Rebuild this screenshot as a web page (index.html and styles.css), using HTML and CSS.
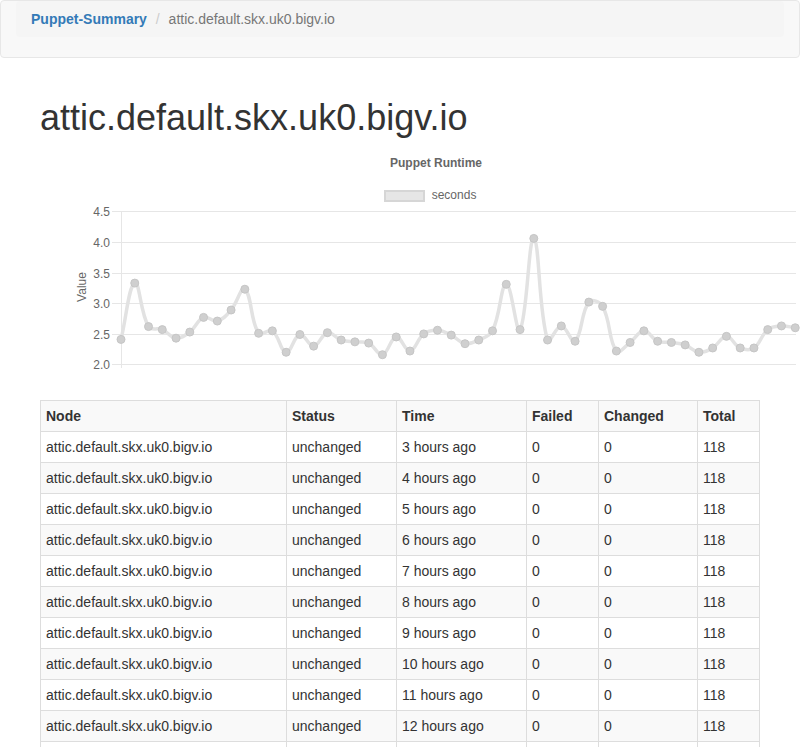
FILE: index.html
```html
<!DOCTYPE html>
<html lang="en">
<head>
<meta charset="utf-8">
<title>Puppet-Summary</title>
<link rel="stylesheet" href="styles.css">
</head>
<body>
<nav class="navbar">
  <div class="navbar-inner">
    <ol class="breadcrumb">
      <li><a href="#" class="brand">Puppet-Summary</a></li>
      <li class="active">attic.default.skx.uk0.bigv.io</li>
    </ol>
  </div>
</nav>
<div class="container">
  <h1 class="node-title">attic.default.skx.uk0.bigv.io</h1>
  <div class="chart-wrap">
    <svg class="chart" width="760" height="232" viewBox="0 0 760 232">
      <text class="chart-title" x="396" y="19.3" text-anchor="middle">Puppet Runtime</text>
      <rect class="legend-box" x="345" y="43" width="39" height="10"></rect>
      <text class="chart-label" x="391.7" y="50.5">seconds</text>
      <g class="grid">
        <line x1="72" y1="63.5" x2="756" y2="63.5"></line>
        <line x1="72" y1="94.5" x2="756" y2="94.5"></line>
        <line x1="72" y1="125.5" x2="756" y2="125.5"></line>
        <line x1="72" y1="155.5" x2="756" y2="155.5"></line>
        <line x1="72" y1="186.5" x2="756" y2="186.5"></line>
        <line x1="72" y1="216.5" x2="756" y2="216.5"></line>
        <line x1="81.5" y1="63" x2="81.5" y2="220"></line>
      </g>
      <g class="chart-label" text-anchor="end">
        <text x="70" y="68">4.5</text>
        <text x="70" y="99">4.0</text>
        <text x="70" y="130">3.5</text>
        <text x="70" y="160">3.0</text>
        <text x="70" y="191">2.5</text>
        <text x="70" y="221">2.0</text>
      </g>
      <text class="chart-label" x="0" y="0" text-anchor="middle" transform="translate(45.7 139) rotate(-90)">Value</text>
      <path id="series-line" class="series-line" d=""></path>
      <g id="series-points" class="series-points"></g>
    </svg>
  </div>
  <table class="reports">
    <colgroup>
      <col class="c-node">
      <col class="c-status">
      <col class="c-time">
      <col class="c-failed">
      <col class="c-changed">
      <col class="c-total">
    </colgroup>
    <tbody>
      <tr><th>Node</th><th>Status</th><th>Time</th><th>Failed</th><th>Changed</th><th>Total</th></tr>
      <tr><td>attic.default.skx.uk0.bigv.io</td><td>unchanged</td><td>3 hours ago</td><td>0</td><td>0</td><td>118</td></tr>
      <tr><td>attic.default.skx.uk0.bigv.io</td><td>unchanged</td><td>4 hours ago</td><td>0</td><td>0</td><td>118</td></tr>
      <tr><td>attic.default.skx.uk0.bigv.io</td><td>unchanged</td><td>5 hours ago</td><td>0</td><td>0</td><td>118</td></tr>
      <tr><td>attic.default.skx.uk0.bigv.io</td><td>unchanged</td><td>6 hours ago</td><td>0</td><td>0</td><td>118</td></tr>
      <tr><td>attic.default.skx.uk0.bigv.io</td><td>unchanged</td><td>7 hours ago</td><td>0</td><td>0</td><td>118</td></tr>
      <tr><td>attic.default.skx.uk0.bigv.io</td><td>unchanged</td><td>8 hours ago</td><td>0</td><td>0</td><td>118</td></tr>
      <tr><td>attic.default.skx.uk0.bigv.io</td><td>unchanged</td><td>9 hours ago</td><td>0</td><td>0</td><td>118</td></tr>
      <tr><td>attic.default.skx.uk0.bigv.io</td><td>unchanged</td><td>10 hours ago</td><td>0</td><td>0</td><td>118</td></tr>
      <tr><td>attic.default.skx.uk0.bigv.io</td><td>unchanged</td><td>11 hours ago</td><td>0</td><td>0</td><td>118</td></tr>
      <tr><td>attic.default.skx.uk0.bigv.io</td><td>unchanged</td><td>12 hours ago</td><td>0</td><td>0</td><td>118</td></tr>
      <tr><td>attic.default.skx.uk0.bigv.io</td><td>unchanged</td><td>13 hours ago</td><td>0</td><td>0</td><td>118</td></tr>
    </tbody>
  </table>
</div>
<script src="chart.js"></script>
</body>
</html>
```

FILE: styles.css
```css
html {
  overflow: hidden;
}

body {
  margin: 0;
  font-family: "Liberation Sans", Arial, Helvetica, sans-serif;
  font-size: 14px;
  line-height: 20px;
  color: #333;
  background: #fff;
}

.navbar {
  min-height: 50px;
  margin-bottom: 20px;
  background: #f8f8f8;
  border: 1px solid #e7e7e7;
  border-radius: 4px;
}

.navbar-inner {
  padding: 0 15px;
}

.breadcrumb {
  list-style: none;
  margin: 0 0 20px;
  padding: 8px 15px;
  background: #f5f5f5;
  border-radius: 4px;
}

.breadcrumb li {
  display: inline-block;
}

.breadcrumb li + li::before {
  content: "/\00a0";
  padding: 0 5px;
  color: #ccc;
}

.brand {
  color: #337ab7;
  font-weight: bold;
  text-decoration: none;
}

.active {
  color: #777;
}

.container {
  display: flow-root;
  box-sizing: border-box;
  width: 750px;
  margin: 0 auto;
  padding: 0 15px;
}

.node-title {
  margin: 20px 0 10px;
  font-size: 36px;
  font-weight: normal;
  line-height: 1.1;
  color: #333;
}

.chart-wrap {
  margin-bottom: 20px;
}

.chart {
  display: block;
  overflow: visible;
}

.chart-title {
  font-family: "Liberation Sans", Arial, sans-serif;
  font-size: 12px;
  font-weight: bold;
  fill: #666;
}

.chart-label {
  font-family: "Liberation Sans", Arial, sans-serif;
  font-size: 12px;
  fill: #666;
}

.legend-box {
  fill: #e6e6e6;
  stroke: #d6d6d6;
  stroke-width: 2;
}

.grid line {
  stroke: #e6e6e6;
  stroke-width: 1;
}

.series-line {
  fill: none;
  stroke: #e2e2e2;
  stroke-width: 3.5;
  stroke-linejoin: round;
}

.series-points circle {
  fill: #cfcfcf;
  stroke: #c6c6c6;
  stroke-width: 1;
}

.reports {
  width: 719px;
  table-layout: fixed;
  border-collapse: collapse;
  border: 1px solid #ddd;
  margin-bottom: 20px;
}

.reports th,
.reports td {
  padding: 5px;
  border: 1px solid #ddd;
  text-align: left;
  line-height: 20px;
  vertical-align: top;
}

.reports th {
  font-weight: bold;
}

.reports tr:nth-child(odd) {
  background: #f9f9f9;
}

.c-node { width: 246px; }
.c-status { width: 110px; }
.c-time { width: 130px; }
.c-failed { width: 72px; }
.c-changed { width: 99px; }
.c-total { width: 62px; }
```

FILE: chart.js
```js
(function () {
  var data = [
    2.41, 3.33, 2.62, 2.57, 2.43, 2.53, 2.77, 2.71, 2.89, 3.23,
    2.51, 2.55, 2.20, 2.49, 2.30, 2.52, 2.40, 2.37, 2.35, 2.16,
    2.45, 2.22, 2.50, 2.56, 2.48, 2.34, 2.40, 2.55, 3.31, 2.57,
    4.06, 2.40, 2.63, 2.38, 3.02, 2.95, 2.22, 2.36, 2.55, 2.38,
    2.36, 2.32, 2.20, 2.27, 2.46, 2.27, 2.27, 2.57, 2.63, 2.60
  ];
  var x0 = 81, dx = 13.76, yBase = 216.5, k = 61.2, t = 0.4;
  var pts = data.map(function (v, i) {
    return { x: x0 + dx * i, y: yBase - (v - 2) * k };
  });
  for (var i = 0; i < pts.length; i++) {
    var prev = pts[i - 1] || pts[i], cur = pts[i], next = pts[i + 1] || pts[i];
    var d01 = Math.sqrt(Math.pow(cur.x - prev.x, 2) + Math.pow(cur.y - prev.y, 2));
    var d12 = Math.sqrt(Math.pow(next.x - cur.x, 2) + Math.pow(next.y - cur.y, 2));
    var s01 = d01 / (d01 + d12), s12 = d12 / (d01 + d12);
    if (isNaN(s01)) s01 = 0;
    if (isNaN(s12)) s12 = 0;
    var fa = t * s01, fb = t * s12;
    cur.c1x = cur.x - fa * (next.x - prev.x);
    cur.c1y = cur.y - fa * (next.y - prev.y);
    cur.c2x = cur.x + fb * (next.x - prev.x);
    cur.c2y = cur.y + fb * (next.y - prev.y);
  }
  var d = 'M' + pts[0].x.toFixed(2) + ' ' + pts[0].y.toFixed(2);
  for (i = 1; i < pts.length; i++) {
    var p = pts[i - 1], c = pts[i];
    d += ' C' + p.c2x.toFixed(2) + ' ' + p.c2y.toFixed(2) + ' ' +
      c.c1x.toFixed(2) + ' ' + c.c1y.toFixed(2) + ' ' +
      c.x.toFixed(2) + ' ' + c.y.toFixed(2);
  }
  document.getElementById('series-line').setAttribute('d', d);
  var g = document.getElementById('series-points');
  var ns = 'http://www.w3.org/2000/svg';
  pts.forEach(function (pt) {
    var circ = document.createElementNS(ns, 'circle');
    circ.setAttribute('cx', pt.x.toFixed(2));
    circ.setAttribute('cy', pt.y.toFixed(2));
    circ.setAttribute('r', '4');
    g.appendChild(circ);
  });
})();
```
